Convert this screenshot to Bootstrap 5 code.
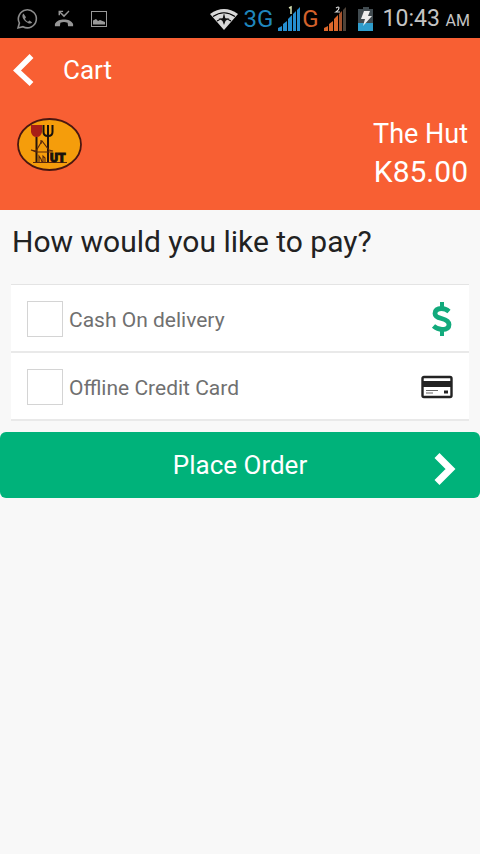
<!DOCTYPE html>
<html lang="en">
<head>
<meta charset="utf-8">
<meta name="viewport" content="width=device-width, initial-scale=1">
<title>Cart</title>
<link rel="stylesheet" href="https://cdn.jsdelivr.net/npm/bootstrap@5.3.0/dist/css/bootstrap.min.css">
<style>
  body { font-family: Roboto, sans-serif; background: #f8f8f8; color: #222; }
  svg { display: block; flex: none; }
  .status-bar { height: 38px; background: #000; color: #c4c4c4; padding: 0 10px 0 16px; }
  .status-bar span { font-size: 24px; line-height: 38px; }
  .net-blue { color: #1f86bd; }
  .net-orange { color: #d4622b; }
  .status-bar .clock { font-size: 23px; margin-left: 9px; padding-top: 2px; }
  .status-bar .clock-suffix { font-size: 16px; }
  .battery { margin-left: 9px; }
  .app-header { background: #f85f33; color: #fff; }
  .title-bar { height: 64px; padding: 0 12px; gap: 28px; }
  .title-bar h1 { font-size: 26px; line-height: 32px; font-weight: 400; }
  .summary { height: 108px; padding: 14px 12px 20px 16px; font-size: 27px; line-height: 37px; }
  .amount { font-size: 30px; }
  .question { font-size: 30px; line-height: 36px; font-weight: 400; padding: 14px 12px 24px; }
  .pay-list { margin: 0 11px 11px; border-top: 1px solid #e4e4e4; }
  .pay-row { height: 68px; background: #fff; border-bottom: 2px solid #e9e9e9; padding: 2px 16px 0; }
  .pay-row label { font-size: 21px; line-height: 28px; color: #707070; padding: 2px 0 0 6px; }
  .pay-check.form-check-input { width: 36px; height: 36px; margin: 0; border: 1px solid #d4d4d4; border-radius: 0; flex: none; }
  .order-btn.btn { height: 66px; background: #00b27a; color: #fff; border: 0; border-radius: 6px; font-size: 26px; line-height: 32px; padding: 0 24px 0 46px; }
</style>
<script src="https://cdn.jsdelivr.net/npm/bootstrap@5.3.0/dist/js/bootstrap.bundle.min.js" defer></script>
</head>
<body>
<div class="status-bar d-flex align-items-center justify-content-between">
  <div class="d-flex align-items-center gap-3">
    <svg width="22" height="22" viewBox="0 0 22 22" fill="none" stroke="#8c8c8c" stroke-width="1.6"><path d="M2 20l1.400-5A9 9 0 1 1 7 18.700z"/><path d="M7.500 5.500c-2 1.500-1 5 1.500 7.500s6 3.500 7.200 1.500l-2.600-2-1.600 1.200c-1.500-.6-2.500-1.700-3-3l1-1.400z" fill="#8c8c8c" stroke="none"/></svg>
    <svg width="20" height="20" viewBox="0 0 22 20" fill="#969696"><path d="M5 1v5H6.600V3.700L11 8l6-6.300L16 .7l-5 5L7.500 2.400H10V1zM1 15.500C4 9 18 9 21 15.500V18H15.500L15 14.200C12 13 10 13 7 14.200L6.500 18H1z"/></svg>
    <svg width="18" height="18" viewBox="0 0 18 18" fill="none" stroke="#999"><rect x="1.500" y="1.500" width="15" height="15"/><path d="M3 14.500v-4l3-1.500 2 2 2-1 5 2v2.500z" fill="#999" stroke="none"/></svg>
  </div>
  <div class="d-flex align-items-center">
    <svg class="me-1" width="30" height="24" viewBox="0 0 30 24"><path d="M1 7Q15-3 29 7L15 23z" fill="#d9d9d9"/><path d="M4 9.500Q15 2 26 9.500M8 14Q15 9 22 14" fill="none" stroke="#000" stroke-width="1.200"/><path d="M15 6l1.500 6 4-1-4 3-1.500 4-1.500-4-4-3 4 1z" fill="#111"/></svg>
    <span class="net-blue">3G</span>
    <svg class="ms-1" width="25" height="28" viewBox="0 0 25 28"><path d="M1 26v-3l4-2v5zM6 26v-7l4-3v10zM11 26V14l4-4v16zM16 26V9l3-3v20zM20 26V5l3-3v24z" fill="#258ed0"/><path d="M12 3l2-1v7" stroke="#d8dfb0" stroke-width="1.500" fill="none"/></svg>
    <span class="net-orange">G</span>
    <svg class="ms-1" width="25" height="28" viewBox="0 0 25 28"><path d="M1 26v-3l4-2v5zM6 26v-7l4-3v10zM11 26V14l4-4v16z" fill="#dc672b"/><path d="M16 26V9l3-3v20z" fill="#a4532d"/><path d="M20 26V5l3-3v24z" fill="#4d4238"/><path d="M13 3q3-2 3 0 0 2-3 4h4" stroke="#ddd" stroke-width="1.200" fill="none"/></svg>
    <svg class="battery" width="17" height="24" viewBox="0 0 17 24"><path d="M6 0h6v2h4v22H1V2h5z" fill="#414b50"/><path d="M1 16h15v8H1z" fill="#2f9dcc"/><path d="M7 4h6l-2 5h4L6 19l2-7H4z" fill="#eee"/></svg>
    <span class="clock">10:43 <span class="clock-suffix">AM</span></span>
  </div>
</div>

<header class="app-header">
  <div class="title-bar d-flex align-items-center">
    <button type="button" class="btn p-0 border-0" aria-label="Back"><svg width="23" height="36" viewBox="0 0 23 36"><path d="M19.500 4L5 18.500 19.500 32" fill="none" stroke="#fff" stroke-width="5.500"/></svg></button>
    <h1 class="mb-0">Cart</h1>
  </div>
  <div class="summary d-flex justify-content-between align-items-start">
    <svg width="67" height="56" viewBox="0 0 67 56" role="img" aria-label="The Hut logo">
      <ellipse cx="33.500" cy="28.500" rx="31.500" ry="25.500" fill="#f59d0b" stroke="#4a1710" stroke-width="1.800"/>
      <path d="M15 9h11v7q-1 5-5.500 5T15 16z" fill="#a81e16"/>
      <path d="M19.500 21h2v25h-2zM31 19h2v27h-2z" fill="#26150c"/>
      <path d="M27.500 9v7q0 4 4.500 4t4.500-4V9M32 9v10" fill="none" stroke="#17110c" stroke-width="2"/>
      <path d="M15 34l5 1 6-10 7 9 4 1-4 1H20z" fill="none" stroke="#5b290c" stroke-width="1.100"/>
      <path d="M25 24v4M23 46v-6l2 3 1 3M27 46v-6l2 2v4M17 46.500h34" fill="none" stroke="#5b290c" stroke-width="1.100"/>
      <text x="34" y="46" font-family="Roboto, sans-serif" font-weight="900" font-size="12" fill="#17110c" stroke="#17110c">UT</text>
    </svg>
    <div class="text-end"><div>The Hut</div><div class="amount">K85.00</div></div>
  </div>
</header>

<main>
  <h2 class="question mb-0">How would you like to pay?</h2>
  <div class="pay-list">
    <div class="pay-row d-flex align-items-center">
      <input class="form-check-input pay-check" type="checkbox" id="cash">
      <label class="flex-grow-1" for="cash">Cash On delivery</label>
      <svg width="22" height="36" viewBox="0 0 22 36" fill="none" stroke="#12aa7c"><path d="M18 10.500Q14.500 7.500 10.500 7.500 4 7.500 4 12.500 4 16 10.500 17.500 18 19.500 18 23.500 18 28.500 11 28.500 6.500 28.500 2.500 25" stroke-width="4.800"/><path d="M11 1v7M11 28v7" stroke-width="4"/></svg>
    </div>
    <div class="pay-row d-flex align-items-center">
      <input class="form-check-input pay-check" type="checkbox" id="card">
      <label class="flex-grow-1" for="card">Offline Credit Card</label>
      <svg width="32" height="24" viewBox="0 0 32 24"><rect x="1.500" y="2" width="29" height="20" rx="1.500" fill="#fff" stroke="#222" stroke-width="2.400"/><path d="M2 6h28v6H2z" fill="#222"/><path d="M5 15.500h12M5 18h7" stroke="#666" stroke-width="1.200"/><path d="M23 15.500h4v3h-4z" fill="#222"/></svg>
    </div>
  </div>
  <button type="button" class="btn order-btn w-100 d-flex align-items-center">
    <span class="flex-grow-1 text-center">Place Order</span>
    <svg class="mt-2" width="22" height="34" viewBox="0 0 22 34"><path d="M3 3.500L16.500 17 3 30.500" fill="none" stroke="#fff" stroke-width="7"/></svg>
  </button>
</main>
</body>
</html>
